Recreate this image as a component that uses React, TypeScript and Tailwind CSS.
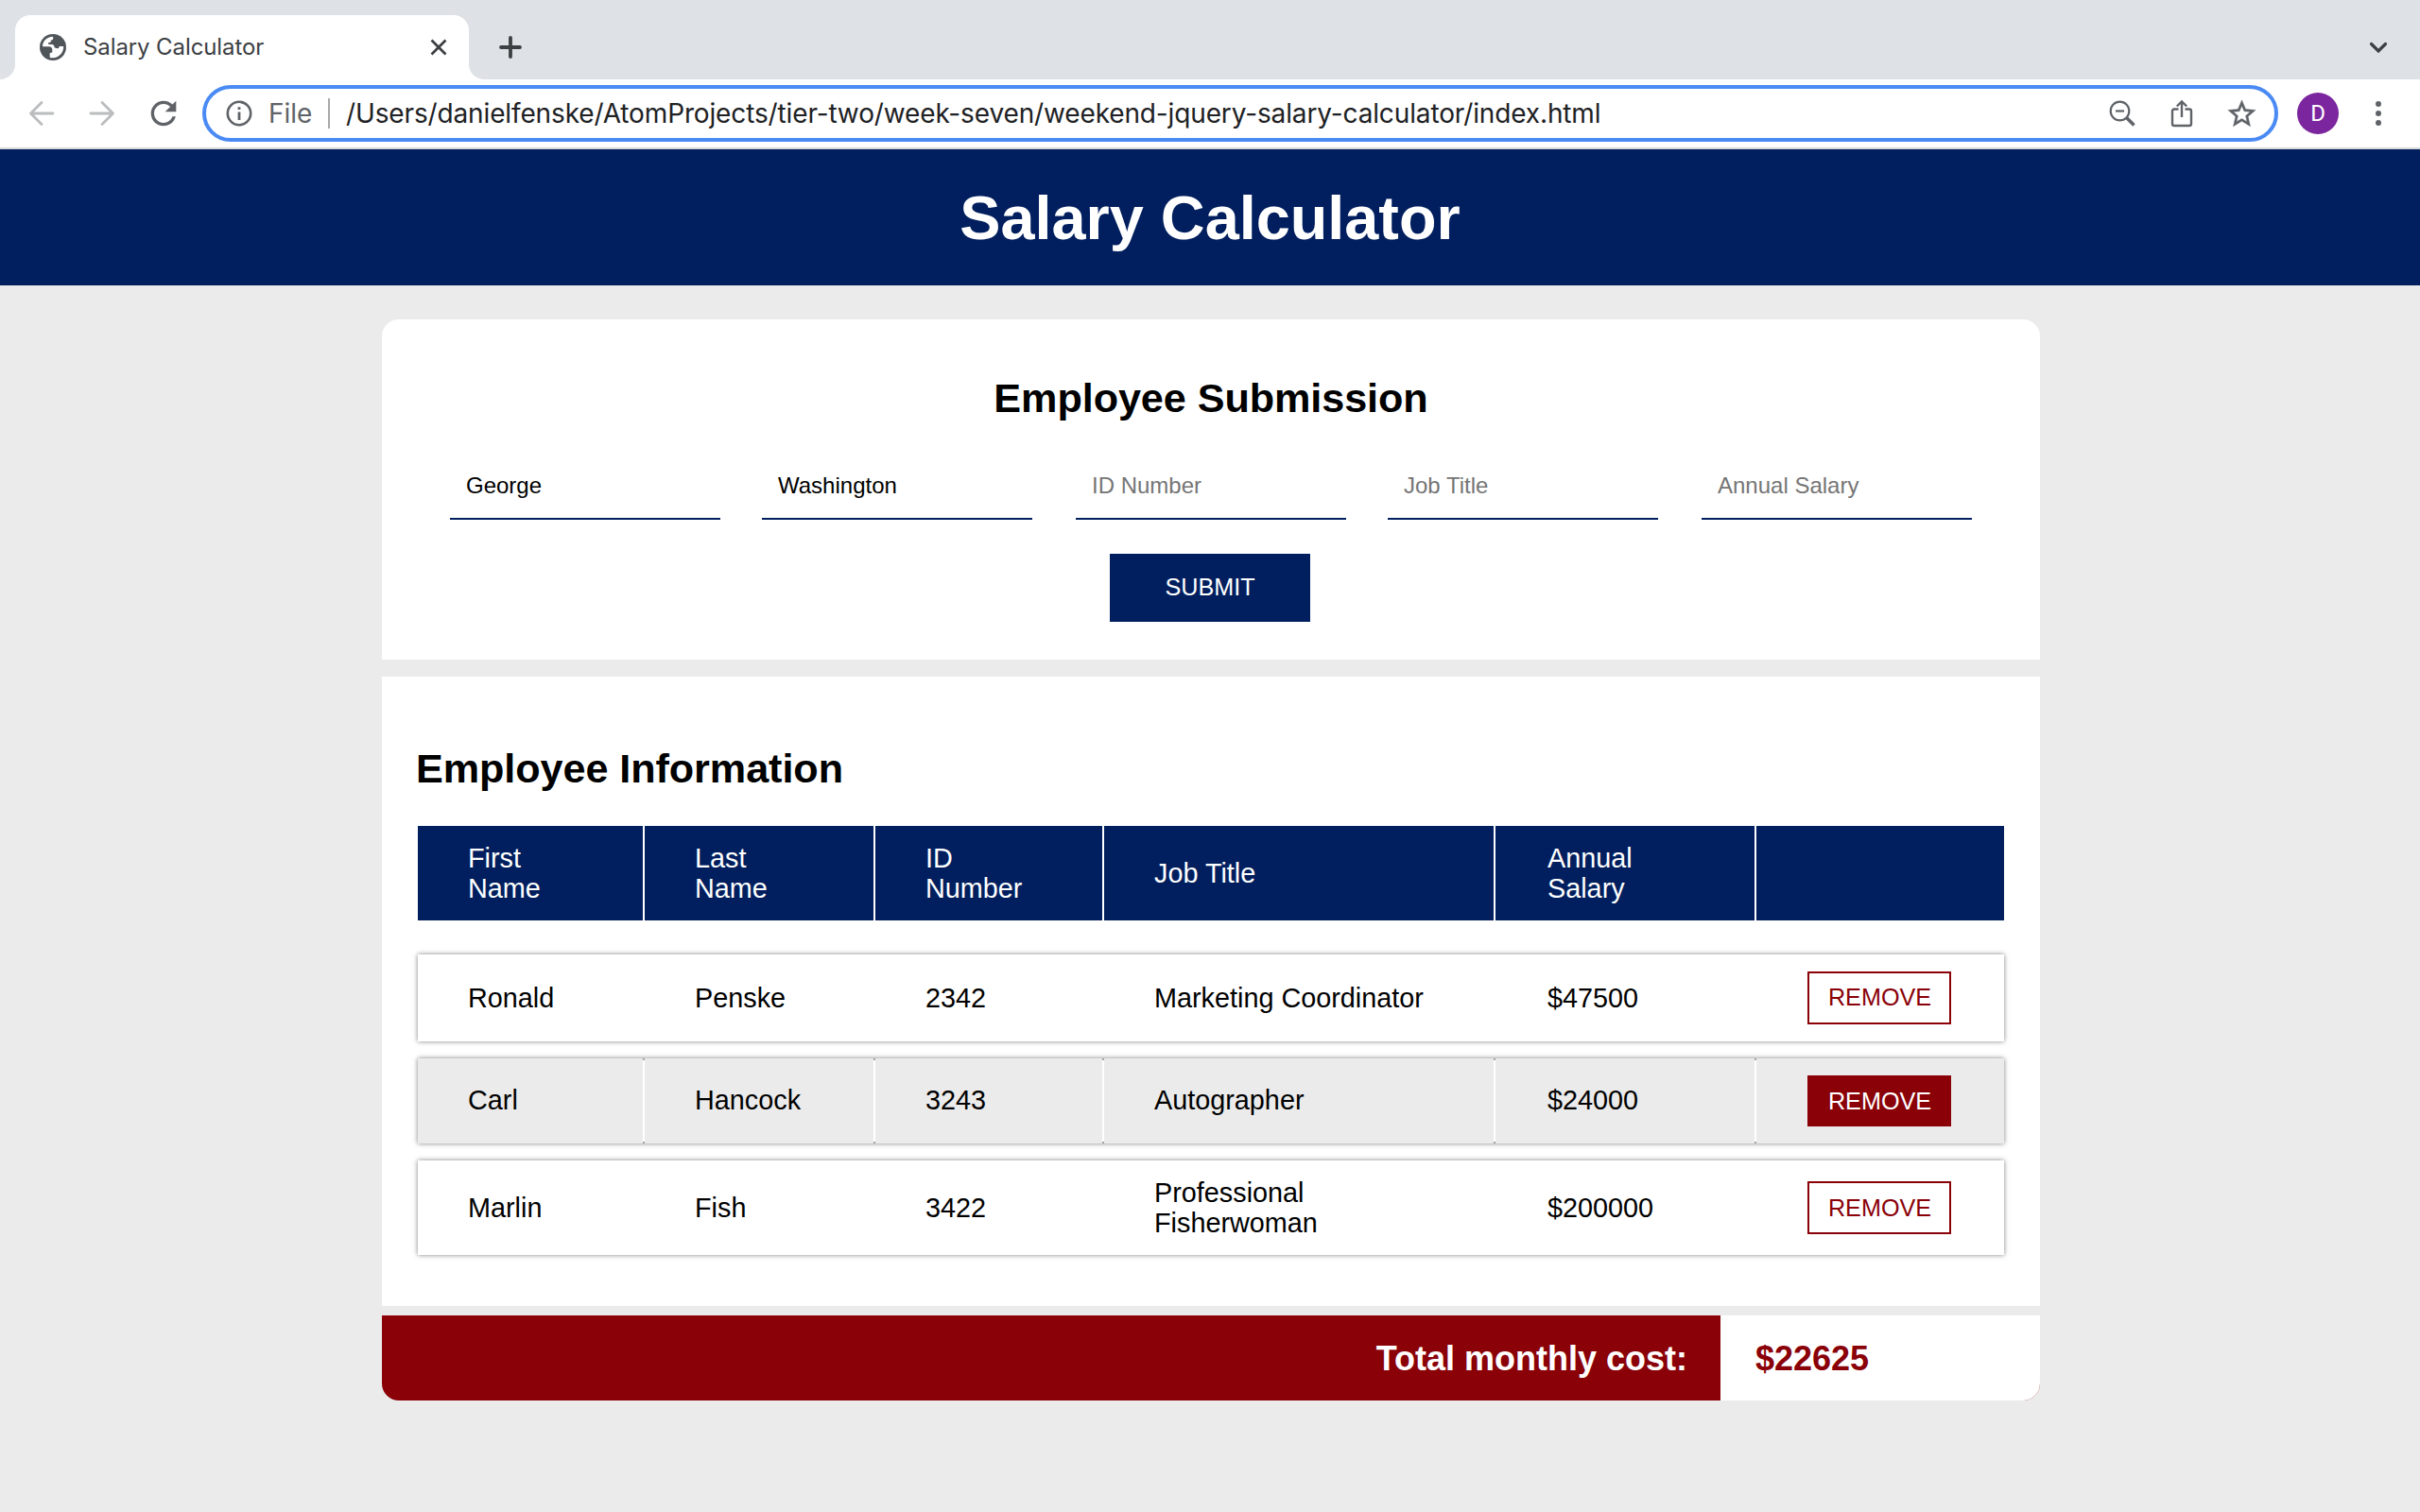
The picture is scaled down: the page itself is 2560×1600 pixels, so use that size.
import React from "react";

const columns = "grid grid-cols-[240px_244px_242px_414px_276px_262px]";
const cellPadding = "pl-[53px] pr-[50px] nth-5:pl-[55px]";

const fields = [
  { label: "First Name", value: "George" },
  { label: "Last Name", value: "Washington" },
  { label: "ID Number", value: "" },
  { label: "Job Title", value: "" },
  { label: "Annual Salary", value: "" },
];

const headers = ["First Name", "Last Name", "ID Number", "Job Title", "Annual Salary", ""];

const employees = [
  { cells: ["Ronald", "Penske", "2342", "Marketing Coordinator", "$47500"], active: false, row: "h-[92px] mt-[36px]", cell: "", button: "h-[56px]" },
  { cells: ["Carl", "Hancock", "3243", "Autographer", "$24000"], active: true, row: "h-[90px] mt-[18px]", cell: "pb-0.5", button: "h-[54px] pt-0.5" },
  { cells: ["Marlin", "Fish", "3422", "Professional Fisherwoman", "$200000"], active: false, row: "h-[100px] mt-[18px]", cell: "", button: "h-[56px] pt-0.5" },
];

function GlobeIcon() {
  return (
    <svg className="size-7 shrink-0" viewBox="0 0 84 84">
      <circle cx="42" cy="42" r="42" fill="#50555a" />
      <path
        fill="#fff"
        d="M9 40C9 23 22 10 42 8.500L43 14Q42 20 35 20.500V26L27 28Q25 33 31 33H41Q47 35 47 43Q52 46 58 46Q61 46 62 39H75.500C77 58 61 76 42 76Q36 76 32 74V61L40 58V51Q40 40 29 40Z"
      />
    </svg>
  );
}

function TabStrip() {
  return (
    <div className="flex h-[84px] items-end bg-[#dee1e6]">
      <div className="size-4 bg-white">
        <div className="size-4 rounded-br-2xl bg-[#dee1e6]" />
      </div>
      <div className="flex h-[68px] w-[480px] items-center rounded-t-2xl bg-white pl-[26px] pr-[22px]">
        <GlobeIcon />
        <span className="ml-[18px] flex-1 text-[24px] leading-none tracking-[-0.1px] whitespace-nowrap text-[#3c4043]">Salary Calculator</span>
        <svg className="size-5" viewBox="0 0 20 20" fill="none" stroke="#3c4043" strokeWidth="2.8">
          <path d="M2.500 2.500l15 15M17.500 2.500l-15 15" />
        </svg>
      </div>
      <div className="size-4 bg-white">
        <div className="size-4 rounded-bl-2xl bg-[#dee1e6]" />
      </div>
      <div className="flex h-[68px] flex-1 items-center justify-between pr-[32px] pl-4">
        <svg className="size-6" viewBox="0 0 24 24" fill="none" stroke="#3c4043" strokeWidth="3.8" strokeLinecap="round">
          <path d="M12 2v20M2 12h20" />
        </svg>
        <svg className="size-6" viewBox="0 0 24 24" fill="none" stroke="#3c4043" strokeWidth="3.2" strokeLinecap="round">
          <path d="M4.500 8.500l7.500 7.500L19.500 8.500" />
        </svg>
      </div>
    </div>
  );
}

function Toolbar() {
  return (
    <div className="flex h-[74px] items-center border-b-2 border-[#d5d7d9] bg-white">
      <svg className="ml-[30px] size-7" viewBox="0 0 28 28" fill="none" stroke="#babcbe" strokeWidth="2.8" strokeLinecap="round" strokeLinejoin="round">
        <path d="M26 14H2.500M14 2.500L2.500 14L14 25.500" />
      </svg>
      <svg className="ml-9 size-7" viewBox="0 0 28 28" fill="none" stroke="#babcbe" strokeWidth="2.8" strokeLinecap="round" strokeLinejoin="round">
        <path d="M2 14h23.500M14 2.500L25.500 14L14 25.500" />
      </svg>
      <svg className="ml-[31px] size-10" viewBox="0 0 24 24" fill="#5f6368">
        <path d="M17.650 6.350C16.200 4.900 14.210 4 12 4c-4.420 0-7.990 3.580-7.990 8s3.570 8 7.990 8c3.730 0 6.840-2.550 7.730-6h-2.080c-.82 2.330-3.040 4-5.650 4-3.310 0-6-2.690-6-6s2.690-6 6-6c1.660 0 3.140.69 4.220 1.780L13 11h7V4l-2.350 2.350z" />
      </svg>
      <div className="ml-[21px] flex h-[60px] w-[2196px] items-center rounded-full border-4 border-[#4a8af4] pr-[17px] pl-[21px]">
        <svg className="size-7 shrink-0" viewBox="0 0 28 28" fill="none" stroke="#5f6368" strokeWidth="2.6">
          <circle cx="14" cy="14" r="12.2" />
          <path d="M14 12.500v8.500M14 7.200v2.900" strokeWidth="2.8" />
        </svg>
        <span className="ml-[17px] w-[63px] text-[28px] leading-none text-[#5f6368]">File</span>
        <span className="h-8 w-[2px] bg-[#a7a9ab]" />
        <span className="ml-[17px] flex-1 text-[28px] leading-none tracking-[-0.135px] whitespace-nowrap text-[#202124]">
          /Users/danielfenske/AtomProjects/tier-two/week-seven/weekend-jquery-salary-calculator/index.html
        </span>
        <svg className="size-7" viewBox="0 0 28 28" fill="none" stroke="#5f6368" strokeWidth="2.2">
          <circle cx="11.5" cy="11.5" r="9.8" />
          <path d="M7 11.500h9" />
          <path d="M18.500 18.500l8 8" strokeWidth="3.6" />
        </svg>
        <svg className="ml-[37px] h-[30px] w-6" viewBox="0 0 24 30" fill="none" stroke="#5f6368" strokeWidth="2.4">
          <path d="M8.500 10.500H4A2 2 0 0 0 2 12.500V26A2 2 0 0 0 4 28H20A2 2 0 0 0 22 26V12.500A2 2 0 0 0 20 10.500H15.500M12 19V3M6.800 7.500L12 2.400L17.200 7.500" />
        </svg>
        <svg className="ml-[34px] size-[35px]" viewBox="0 0 24 24" fill="#5f6368" stroke="#5f6368" strokeWidth="0.3">
          <path d="M22 9.240l-7.190-.62L12 2 9.190 8.630 2 9.240l5.460 4.730L5.820 21 12 17.270 18.180 21l-1.630-7.030L22 9.240zM12 15.400l-3.760 2.270 1-4.280-3.320-2.880 4.380-.38L12 6.100l1.710 4.040 4.380.38-3.320 2.880 1 4.280L12 15.400z" />
        </svg>
      </div>
      <div className="ml-5 flex size-11 items-center justify-center rounded-full bg-[#7b269e] font-[Roboto] text-[24px] leading-none text-white">D</div>
      <div className="ml-[39px] flex flex-col gap-1">
        <span className="size-1.5 rounded-full bg-[#5f6368]" />
        <span className="size-1.5 rounded-full bg-[#5f6368]" />
        <span className="size-1.5 rounded-full bg-[#5f6368]" />
      </div>
    </div>
  );
}

function SubmissionForm() {
  return (
    <section className="h-[360px] rounded-t-[18px] bg-white px-[72px] pt-[58px]">
      <h2 className="text-center text-[43.2px] leading-[50px] font-bold tracking-[-0.08px]">Employee Submission</h2>
      <div className="mt-[32px] grid grid-cols-[330px_332px_330px_332px_286px]">
        {fields.map((f) => (
          <input
            key={f.label}
            className="h-[72px] w-[286px] border-b-2 border-[#011f5e] px-[17px] pt-0.5 text-[24px] text-black placeholder:text-[#757575]"
            placeholder={f.label}
            defaultValue={f.value}
          />
        ))}
      </div>
      <button className="mt-9 ml-[698px] block h-[72px] w-[212px] bg-[#011f5e] text-[25.2px] leading-none text-white">SUBMIT</button>
    </section>
  );
}

function EmployeeTable() {
  return (
    <section className="mt-[18px] h-[666px] bg-white px-9 pt-[72px]">
      <h2 className="text-[43.2px] leading-[50px] font-bold tracking-[-0.08px]">Employee Information</h2>
      <div className={`${columns} mx-0.5 mt-[36px] h-[100px] w-[1678px] text-[28.8px] leading-[32px] text-white`}>
        {headers.map((h, i) => (
          <div key={i} className={`flex items-center border-r-2 border-white bg-[#011f5e] last:border-r-0 ${cellPadding}`}>{h}</div>
        ))}
      </div>
      {employees.map((e) => (
        <div key={e.cells[0]} className={`${columns} ${e.row} mx-0.5 w-[1678px] text-[28.8px] leading-[32px] shadow-[0_0_5px_rgba(0,0,0,0.5)]`}>
          {e.cells.map((c) => (
            <div
              key={c}
              className={`flex items-center border-r-2 border-white ${cellPadding} ${e.cell} ${
                e.active
                  ? "relative bg-[#ebebeb] after:absolute after:top-0 after:-right-0.5 after:h-full after:w-0.5 after:border-y-2 after:border-[#a3a3a3]"
                  : "bg-white"
              }`}
            >
              {c}
            </div>
          ))}
          <div className={`flex items-center pl-[54px] ${e.active ? "bg-[#ebebeb]" : "bg-white"}`}>
            <button className={`${e.button} w-[152px] border-2 border-[#8a0108] pl-px text-[25.2px] leading-none ${e.active ? "bg-[#8a0108] text-white" : "text-[#8a0108]"}`}>REMOVE</button>
          </div>
        </div>
      ))}
    </section>
  );
}

export default function App() {
  return (
    <div className="h-[1600px] w-[2560px] overflow-hidden bg-[#ebebeb] font-['Liberation_Sans',Arial,sans-serif] text-black">
      <div className="font-[Inter,sans-serif]">
        <TabStrip />
        <Toolbar />
      </div>
      <header className="flex h-[144px] items-center justify-center bg-[#011f5e] pt-[3px]">
        <h1 className="text-[64.8px] leading-none font-bold text-white">Salary Calculator</h1>
      </header>
      <main className="mt-9 ml-[404px] w-[1754px]">
        <SubmissionForm />
        <EmployeeTable />
        <footer className="mt-[10px] flex h-[90px] rounded-b-[18px] bg-[#8a0108] text-[36px] font-bold">
          <div className="flex w-[1416px] items-center justify-end pt-0.5 pr-[35px] text-white">Total monthly cost:</div>
          <div className="flex flex-1 items-center rounded-br-[18px] bg-white pt-0.5 pl-[37px] text-[#8a0108]">$22625</div>
        </footer>
      </main>
    </div>
  );
}
